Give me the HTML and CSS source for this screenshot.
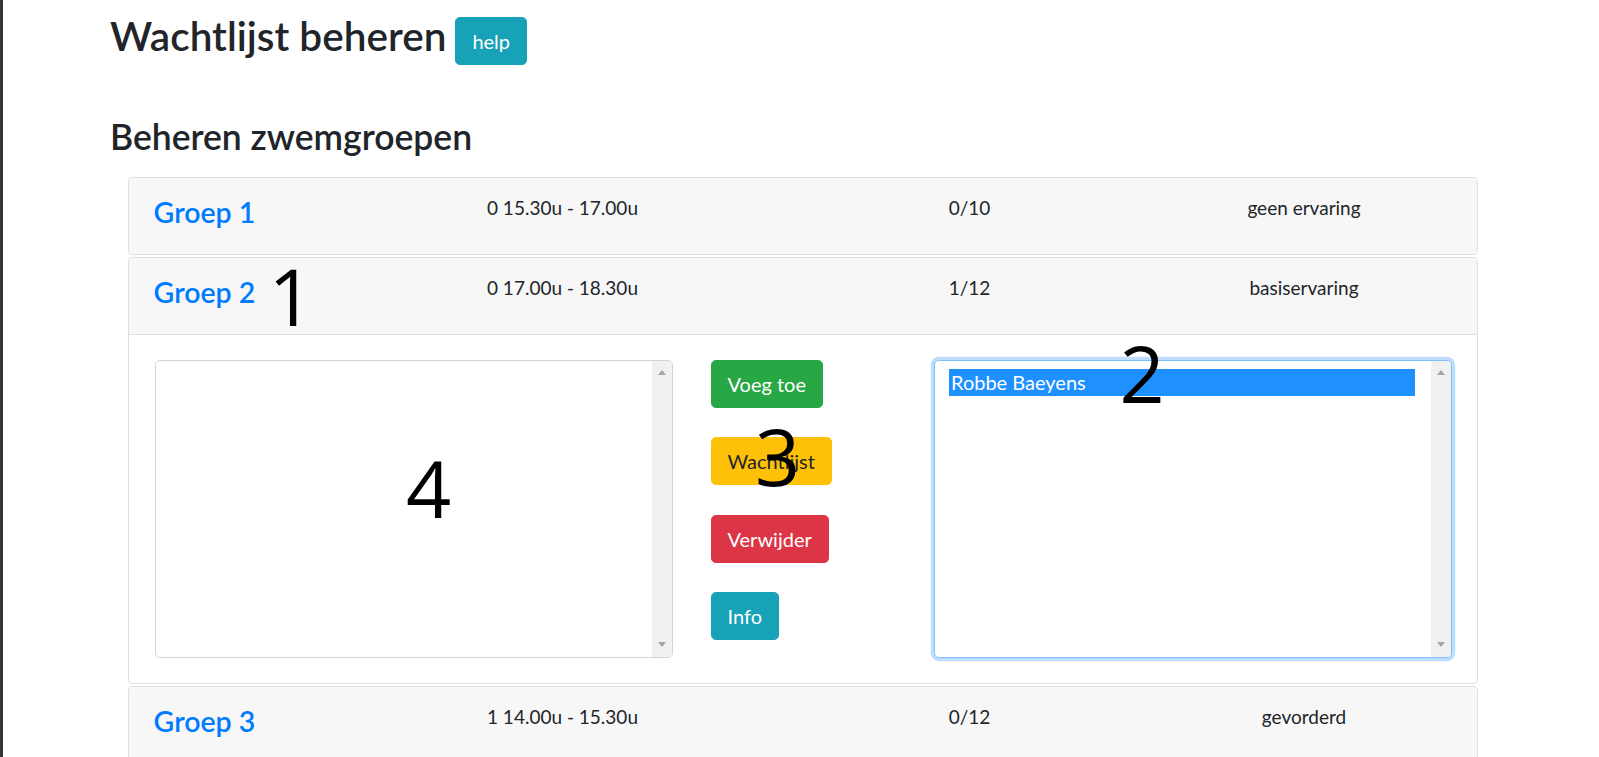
FILE: index.html
```html
<!DOCTYPE html>
<html lang="nl">
<head>
<meta charset="utf-8">
<title>Wachtlijst beheren</title>
<link rel="stylesheet" href="styles.css">
</head>
<body>
<div class="page">
  <div class="title-row">
    <h1 class="title">Wachtlijst beheren</h1>
    <button class="btn btn-info btn-help">help</button>
  </div>
  <h2 class="subtitle">Beheren zwemgroepen</h2>

  <div class="accordion">
    <div class="card">
      <div class="card-header">
        <a class="group-link" href="#">Groep 1</a>
        <span class="cell">0 15.30u - 17.00u</span>
        <span class="cell center">0/10</span>
        <span class="cell center">geen ervaring</span>
      </div>
    </div>

    <div class="card">
      <div class="card-header">
        <a class="group-link" href="#">Groep 2</a>
        <span class="cell">0 17.00u - 18.30u</span>
        <span class="cell center">1/12</span>
        <span class="cell center">basiservaring</span>
      </div>
      <div class="card-body">
        <div class="listbox">
          <div class="list-content"></div>
          <div class="scrollbar"><span class="arrow-up"></span><span class="arrow-down"></span></div>
        </div>
        <div class="actions">
          <button class="btn btn-success">Voeg toe</button>
          <button class="btn btn-warning">Wachtlijst</button>
          <button class="btn btn-danger">Verwijder</button>
          <button class="btn btn-info">Info</button>
        </div>
        <div class="listbox focused">
          <div class="list-content">
            <div class="option selected">Robbe Baeyens</div>
          </div>
          <div class="scrollbar"><span class="arrow-up"></span><span class="arrow-down"></span></div>
        </div>
      </div>
    </div>

    <div class="card">
      <div class="card-header">
        <a class="group-link" href="#">Groep 3</a>
        <span class="cell">1 14.00u - 15.30u</span>
        <span class="cell center">0/12</span>
        <span class="cell center">gevorderd</span>
      </div>
    </div>
  </div>

  <span class="note note-1">1</span>
  <span class="note note-2">2</span>
  <span class="note note-3">3</span>
  <span class="note note-4">4</span>
</div>
</body>
</html>
```
FILE: styles.css
```css
html, body {
  margin: 0;
  padding: 0;
  background: #ffffff;
}

body {
  font-family: Lato, "Open Sans", sans-serif;
  color: #212529;
  overflow: hidden;
}

.page {
  position: relative;
  min-height: 100vh;
  box-sizing: border-box;
  border-left: 3px solid #34383c;
  padding: 0 121px 0 107px;
}

.title-row {
  display: flex;
  align-items: flex-start;
}

.title {
  margin: 11.5px 0 0 0;
  font-size: 40.5px;
  font-weight: 600;
  line-height: 1.2;
}

.btn-help {
  margin: 17px 0 0 9px;
}

.subtitle {
  margin: 50.5px 0 0 0;
  font-size: 35.5px;
  font-weight: 600;
  line-height: 1.2;
}

/* Buttons */
.btn {
  display: inline-block;
  box-sizing: border-box;
  height: 48px;
  padding: 8px 16px;
  border: 1px solid transparent;
  border-radius: 4.8px;
  font-family: Lato, "Open Sans", sans-serif;
  font-size: 20px;
  font-weight: 400;
  line-height: 30px;
  color: #ffffff;
  cursor: pointer;
  white-space: nowrap;
}
.btn-info { background: #17a2b8; border-color: #17a2b8; }
.btn-success { background: #28a745; border-color: #28a745; }
.btn-warning { background: #ffc107; border-color: #ffc107; color: #212529; }
.btn-danger { background: #dc3545; border-color: #dc3545; }

/* Accordion */
.accordion {
  margin: 18.5px 0 0 18px;
  width: 1350px;
}

.card {
  box-sizing: border-box;
  border: 1px solid #dfdfdf;
  border-radius: 4px;
  margin-bottom: 2px;
  background: #ffffff;
  overflow: hidden;
}

.card-header {
  box-sizing: border-box;
  height: 76px;
  padding: 16px 5.5px 0 24.6px;
  background: #f7f7f7;
  display: grid;
  grid-template-columns: 333.4px 315.5px 334px 1fr;
  align-items: start;
}

.group-link {
  margin-top: 1.2px;
  font-size: 28.5px;
  font-weight: 600;
  line-height: 1.2;
  color: #007bff;
  text-decoration: none;
}

.cell {
  font-size: 19px;
  line-height: 1.5;
  white-space: nowrap;
}
.cell.center { text-align: center; }

.card-body {
  border-top: 1px solid #dfdfdf;
  padding: 25px 25.5px 25px 25.5px;
  display: grid;
  grid-template-columns: 518px 1fr 518px;
}

/* Listboxes */
.listbox {
  box-sizing: border-box;
  height: 298px;
  border: 1px solid #ced4da;
  border-radius: 4.8px;
  background: #ffffff;
  display: flex;
  overflow: hidden;
}
.listbox.focused {
  border-color: #80bdff;
  box-shadow: 0 0 0 3.2px rgba(0, 123, 255, 0.25);
}

.list-content {
  flex: 1;
  padding: 8px 16px 8px 14.5px;
}

.option {
  height: 27.7px;
  box-sizing: border-box;
  padding: 0 2px 1px 2px;
  font-size: 20px;
  line-height: 26.7px;
  white-space: nowrap;
}
.option.selected {
  background: #1e90ff;
  color: #ffffff;
}

.scrollbar {
  width: 20px;
  background: #f1f1f1;
  display: flex;
  flex-direction: column;
  align-items: center;
  justify-content: space-between;
  padding: 9px 0 10px 0;
}
.arrow-up, .arrow-down {
  width: 0;
  height: 0;
  border-left: 4.5px solid transparent;
  border-right: 4.5px solid transparent;
}
.arrow-up { border-bottom: 5px solid #a6a6a6; }
.arrow-down { border-top: 5px solid #a6a6a6; }

.actions {
  padding-left: 38px;
  display: flex;
  flex-direction: column;
  align-items: flex-start;
  gap: 29.5px;
}

/* Annotation numbers drawn over the screenshot */
.note {
  position: absolute;
  width: 60px;
  text-align: center;
  font-family: "Open Sans", sans-serif;
  font-size: 79px;
  font-weight: 400;
  line-height: 1;
  color: #000000;
  pointer-events: none;
}
.note-1 { left: 258px; top: 256px; }
.note-2 { left: 1109px; top: 333px; }
.note-3 { left: 744.5px; top: 416px; }
.note-4 { left: 395.5px; top: 448px; }
```
